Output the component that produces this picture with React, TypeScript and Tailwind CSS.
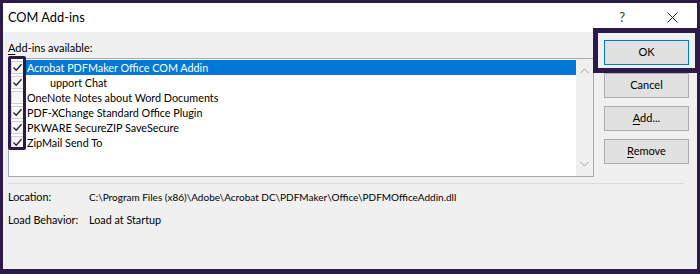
import React from 'react';

const addins = [
    { name: "Acrobat PDFMaker Office COM Addin", checked: true, selected: true },
    { name: "upport Chat", checked: true, cut: true },
    { name: "OneNote Notes about Word Documents", checked: false },
    { name: "PDF-XChange Standard Office Plugin", checked: true },
    { name: "PKWARE SecureZIP SaveSecure", checked: true },
    { name: "ZipMail Send To", checked: true },
];

const Check = () => (
    <svg width="11" height="11" viewBox="0 0 11 11" fill="none">
        <path d="M1.5 5.5 L4.2 8.3 L9.5 2.2" stroke="#222" strokeWidth="1.3" />
    </svg>
);

const Chevron = ({ up }: { up?: boolean }) => (
    <svg width="9" height="6" viewBox="0 0 9 6" fill="none">
        <path d={up ? "M0.5 5 L4.5 1 L8.5 5" : "M0.5 1 L4.5 5 L8.5 1"} stroke="#a0a0a0" strokeWidth="1" />
    </svg>
);

const App = () => {
    return (
        <div className="w-[700px] h-[274px] bg-[#2c1a4b] pt-[3px] px-[3px] pb-[5px] text-black" style={{ fontFamily: 'Lato, "Noto Sans", sans-serif' }}>
            <div className="relative h-full bg-[#f0f0f0] flex flex-col">
                {/* title bar */}
                <div className="h-[29px] bg-white flex items-center pl-[5px] pr-[19px] text-[12.8px]">
                    <span>COM Add-ins</span>
                    <span className="ml-auto mr-[42px] text-[13px] text-[#333]">?</span>
                    <svg width="11" height="11" viewBox="0 0 11 11">
                        <path d="M0.5 0.5 L10.5 10.5 M10.5 0.5 L0.5 10.5" stroke="#222" strokeWidth="1" />
                    </svg>
                </div>

                <div className="flex px-[5px]">
                    <div className="w-[586px]">
                        <div className="pt-[8px] h-[26px] leading-[16px] text-[11px]">
                            <span className="underline underline-offset-2">A</span>dd-ins available:
                        </div>
                        <div className="relative h-[119px] bg-white border border-[#a9a9a9] flex text-[10.8px]">
                            <div className="flex-1 pt-[1px]">
                                {addins.map((a, i) => (
                                    <div key={i} className="h-[15px] flex items-center">
                                        <div className="ml-[2px] w-[13px] h-[13px] border border-[#d0d0d0] bg-[#f7f7f7] flex items-center justify-center">
                                            {a.checked && <Check />}
                                        </div>
                                        <div className={`ml-[2px] h-[15px] flex-1 flex items-center leading-[14px] ${a.selected ? 'bg-[#0078d7] text-white' : ''} ${a.cut ? 'pl-[24px]' : 'pl-[1px]'}`}>
                                            {a.name}
                                        </div>
                                    </div>
                                ))}
                            </div>
                            <div className="w-[17px] bg-[#f0f0f0] flex flex-col items-center justify-between py-[9px]">
                                <Chevron up />
                                <Chevron />
                            </div>
                        </div>
                    </div>

                    <div className="ml-[10px] w-[85px] pt-[8px] flex flex-col gap-[8px] text-[11px]">
                        <button className="h-[25px] bg-[#e1e1e1] border border-[#0078d7]">OK</button>
                        <button className="h-[25px] bg-[#e1e1e1] border border-[#adadad]">Cancel</button>
                        <button className="h-[25px] bg-[#e1e1e1] border border-[#adadad]"><span className="underline underline-offset-2">A</span>dd...</button>
                        <button className="h-[25px] bg-[#e1e1e1] border border-[#adadad]"><span className="underline underline-offset-2">R</span>emove</button>
                    </div>
                </div>

                <div className="mx-[5px] mt-[6px] w-[676px] h-px bg-[#dadada]" />

                <div className="px-[5px] mt-[5px] flex flex-col gap-[7px] text-[10px] leading-[16px] whitespace-nowrap">
                    <div className="flex">
                        <span className="w-[81px] shrink-0 text-[10.8px]">Location:</span>
                        <span>C:\Program Files (x86)\Adobe\Acrobat DC\PDFMaker\Office\PDFMOfficeAddin.dll</span>
                    </div>
                    <div className="flex">
                        <span className="w-[81px] shrink-0 text-[10.8px]">Load Behavior:</span>
                        <span className="text-[10.8px]">Load at Startup</span>
                    </div>
                </div>

                {/* highlight marks */}
                <div className="absolute left-[5px] top-[53px] w-[18px] h-[94px] border-[3px] border-[#2c1a4b] rounded-[2px]" />
                <div className="absolute left-[590px] top-[25px] right-[-3px] h-[45px] border-[5px] border-[#2c1a4b]" />
            </div>
        </div>
    );
};

export default App;
